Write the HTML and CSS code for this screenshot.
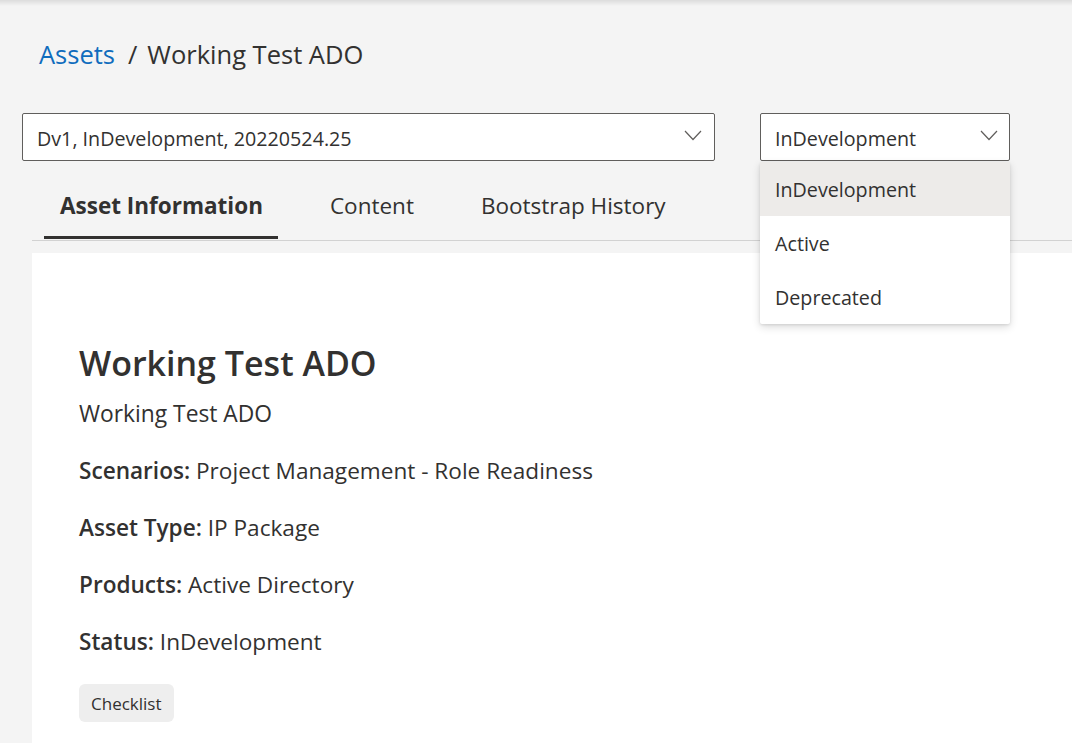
FILE: index.html
```html
<!DOCTYPE html>
<html>
<head>
<meta charset="utf-8">
<link rel="stylesheet" href="styles.css">
</head>
<body>
<div class="topshadow"></div>
<div class="page">
  <nav class="breadcrumb">
    <a class="crumb-link" href="#">Assets</a>
    <span class="crumb-sep">/</span>
    <span class="crumb-current">Working Test ADO</span>
  </nav>

  <div class="controls">
    <div class="select select-wide">
      <span class="select-text">Dv1, InDevelopment, 20220524.25</span>
      <svg class="chev" width="18" height="11" viewBox="0 0 18 11"><path d="M1 1 L9 9.5 L17 1" fill="none" stroke="#605e5c" stroke-width="1.2"/></svg>
    </div>
    <div class="status-wrap">
      <div class="select select-status">
        <span class="select-text">InDevelopment</span>
        <svg class="chev" width="18" height="11" viewBox="0 0 18 11"><path d="M1 1 L9 9.5 L17 1" fill="none" stroke="#605e5c" stroke-width="1.2"/></svg>
      </div>
      <ul class="menu">
        <li class="menu-item selected">InDevelopment</li>
        <li class="menu-item">Active</li>
        <li class="menu-item">Deprecated</li>
      </ul>
    </div>
  </div>

  <div class="tabs">
    <div class="tab active">Asset Information</div>
    <div class="tab">Content</div>
    <div class="tab">Bootstrap History</div>
  </div>

  <section class="panel">
    <h1 class="title">Working Test ADO</h1>
    <p class="subtitle">Working Test ADO</p>
    <p class="field"><b>Scenarios:</b> Project Management - Role Readiness</p>
    <p class="field"><b>Asset Type:</b> IP Package</p>
    <p class="field"><b>Products:</b> Active Directory</p>
    <p class="field"><b>Status:</b> InDevelopment</p>
    <button class="chip">Checklist</button>
  </section>
</div>
</body>
</html>
```
FILE: styles.css
```css
* { box-sizing: border-box; }
html, body {
  margin: 0;
  padding: 0;
  height: 100%;
  overflow: hidden;
}
body {
  background: #f4f4f4;
  font-family: "Open Sans", "Noto Sans", sans-serif;
  color: #323130;
  display: flex;
  flex-direction: column;
}
.topshadow {
  height: 6px;
  flex: none;
  background: linear-gradient(#dcdcdc, #f4f4f4);
}
.page {
  flex: 1;
  min-height: 0;
  display: flex;
  flex-direction: column;
  padding: 0 0 0 22px;
}
.breadcrumb {
  display: flex;
  align-items: baseline;
  padding: 31px 0 0 17px;
  height: 107px;
  flex: none;
  font-size: 25.5px;
  line-height: 34px;
}
.crumb-link {
  color: #0f6cbd;
  text-decoration: none;
}
.crumb-sep { margin: 0 10px 0 13px; }
.controls {
  display: flex;
  gap: 45px;
  align-items: flex-start;
  flex: none;
}
.select {
  height: 48px;
  background: #fff;
  border: 1px solid #605e5c;
  border-radius: 2px;
  display: flex;
  align-items: center;
  justify-content: space-between;
  padding: 0 12px 0 14px;
  font-size: 19.7px;
}
.select-text { margin-top: 2px; }
.select-wide { width: 693px; }
.status-wrap { position: relative; }
.select-status { width: 250px; padding-right: 11px; }
.chev { margin-top: -3px; }
.menu {
  position: absolute;
  top: 49px;
  left: 0;
  width: 250px;
  margin: 0;
  padding: 0;
  list-style: none;
  background: #fff;
  border-radius: 2px;
  box-shadow: 0 3px 8px rgba(0,0,0,0.14), 0 1px 3px rgba(0,0,0,0.1);
  z-index: 5;
}
.menu-item {
  height: 54px;
  display: flex;
  align-items: center;
  padding-left: 15px;
  font-size: 19.7px;
}
.menu-item.selected { background: #edebe9; }
.tabs {
  display: flex;
  flex: none;
  margin: 14px 0 0 10px;
  padding-left: 12px;
  border-bottom: 1px solid #d2d2d2;
}
.tab {
  font-size: 22.5px;
  padding: 0 15px 4px 16px;
  height: 65px;
  display: flex;
  align-items: center;
  margin-right: 36px;
  position: relative;
}
.tab.active { font-weight: 700; }
.tab.active::after {
  content: "";
  position: absolute;
  left: 0;
  right: 0;
  bottom: 1px;
  height: 3px;
  background: #323130;
}
.panel {
  flex: 1;
  min-height: 0;
  overflow: hidden;
  background: #fff;
  margin: 12px 0 0 10px;
  padding: 87px 0 0 47px;
}
.title {
  margin: 0;
  font-size: 34px;
  font-weight: 600;
  line-height: 46px;
}
.subtitle {
  margin: 12px 0 0;
  font-size: 22.8px;
  line-height: 32px;
}
.field {
  margin: 25px 0 0;
  font-size: 22.6px;
  line-height: 32px;
}
.field b { font-weight: 600; }
.chip {
  display: block;
  margin-top: 26px;
  background: #eeeeee;
  border: none;
  border-radius: 6px;
  font-family: inherit;
  font-size: 17px;
  color: #323130;
  height: 38px;
  padding: 0 12px;
}
```
